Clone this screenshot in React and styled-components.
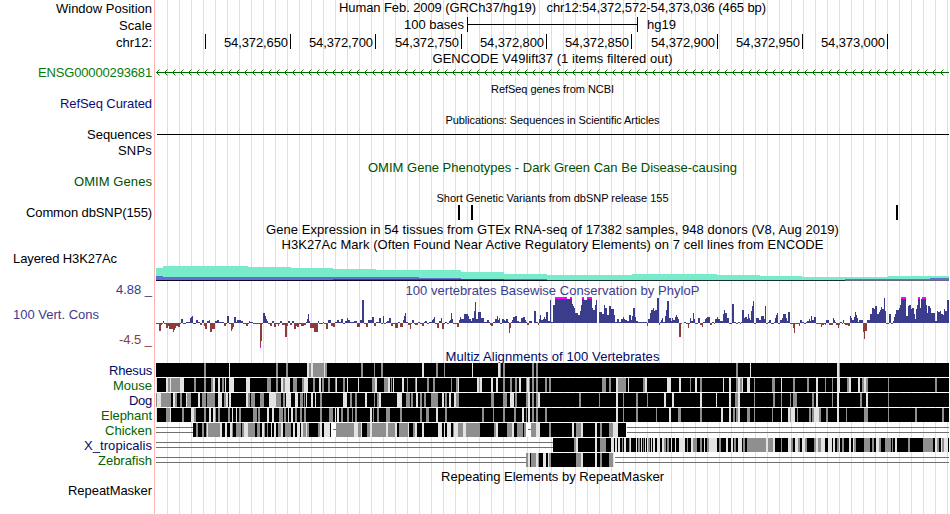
import { useLayoutEffect, useRef, useState } from "react";
import styled, { createGlobalStyle } from "styled-components";

const colors = {
  ink: "#000",
  gene: "#0a7a0a",
  refseq: "#0c0c78",
  omim: "#005000",
  navy: "#000a64",
  green: "#006400",
  wiggle: "#3c3c8c",
  wiggleDark: "#8c3c3c",
};

const GlobalStyle = createGlobalStyle`
  body {
    margin: 0;
    background: #fff;
  }
`;

const Browser = styled.main`
  width: 950px;
  height: 514px;
  overflow: hidden;
  font-family: "Liberation Sans", Arial, sans-serif;
  font-size: 13px;
  line-height: 15px;
  color: ${colors.ink};
  background:
    linear-gradient(
      90deg,
      #fff 154px,
      #ffb4b4 154px 155px,
      #fff 155px 156px,
      transparent 156px
    ),
    linear-gradient(90deg, #dcdcf8 1px, transparent 1px) 11px 0 / 12px 100%;
`;

const Row = styled.div`
  display: grid;
  grid-template-columns: 155px 1fr;
  height: ${({ $h }) => $h}px;
`;

const Label = styled.div`
  box-sizing: border-box;
  padding: ${({ $top }) => $top || 0}px 3px 0 0;
  color: ${({ $color }) => $color || colors.ink};
  text-align: right;
  white-space: nowrap;
`;

const SideLabel = styled(Label)`
  padding-left: 13px;
  text-align: left;
`;

const Title = styled.div`
  grid-column: 2;
  padding-top: ${({ $top }) => $top || 0}px;
  color: ${({ $color }) => $color || colors.ink};
  font-size: ${({ $small }) => ($small ? 11 : 13)}px;
  text-align: center;
  white-space: nowrap;
`;

const Fitted = styled.span`
  display: inline-block;
  white-space: pre;
`;

const Plot = styled.svg`
  grid-column: 2;
  display: block;
  width: 795px;
  height: ${({ $h }) => $h}px;
  shape-rendering: ${({ $smooth }) => ($smooth ? "auto" : "crispEdges")};
`;

const ScaleBar = styled.div`
  display: flex;
  height: 15px;
`;

const ScaleText = styled.div`
  box-sizing: border-box;
  width: ${({ $w }) => $w}px;
  padding: 0 3px 0 9px;
  text-align: ${({ $align }) => $align};
`;

const Span = styled.div`
  box-sizing: border-box;
  width: 171px;
  border: solid #000;
  border-width: 0 1px;
  background: linear-gradient(#000, #000) 0 7px / 100% 1px no-repeat;
`;

const Ruler = styled.div`
  display: flex;
  height: 15px;
  padding-top: 1px;
`;

const Tick = styled.div`
  box-sizing: border-box;
  width: ${({ $w }) => $w}px;
  padding-right: 2px;
  border-right: 1px solid #000;
  line-height: 17px;
  text-align: right;
`;

const Range = styled(Label)`
  display: grid;
  grid-template-rows: 25px 25px 1fr;
`;

const Limit = styled.div`
  color: ${({ $color }) => $color};
`;

const RangeName = styled(Limit)`
  padding-left: 13px;
  text-align: left;
`;

const Stack = styled.div`
  display: grid;
  grid-template-columns: 0 795px;
  grid-template-rows: 14px 51px;
  padding-top: 1px;
`;

// Spreads the letters of a line over a fixed number of pixels.
function Fit({ w, children }) {
  const ref = useRef(null);
  const [spacing, setSpacing] = useState(0);

  useLayoutEffect(() => {
    const natural = ref.current.getBoundingClientRect().width;
    setSpacing((w - natural) / children.length);
  }, []);

  return (
    <Fitted ref={ref} style={{ letterSpacing: `${spacing}px` }}>
      {children}
    </Fitted>
  );
}

const ticks = [
  [51, ""],
  [85, "54,372,650"],
  [85, "54,372,700"],
  [86, "54,372,750"],
  [85, "54,372,800"],
  [85, "54,372,850"],
  [86, "54,372,900"],
  [85, "54,372,950"],
  [85, "54,373,000"],
];

// Steps are "x:value"; each value holds until the next x.
const parseSteps = (text, end) => {
  const points = text
    .trim()
    .split(/\s+/)
    .map((p) => p.split(":").map(Number));
  return points.map(([x, v], i) => ({
    x,
    v,
    w: (points[i + 1] ? points[i + 1][0] : end) - x,
  }));
};

const acetylation = [
  {
    fill: "#77ebca",
    steps: "156:12 163:14 248:13 291:12 333:11 376:10 461:8 504:6 547:5 632:6 717:5 760:4 802:3 888:4",
  },
  {
    fill: "#6272cc",
    steps: "156:4 163:3 333:3 376:3 419:2 461:1 547:0 845:1 930:2",
  },
  { fill: "#2f3ccc", steps: "156:0 333:1 461:1 504:0" },
];

const phyloP = parseSteps(
  `
  156:-1 159:-8 161:-2 162:-1 163:2 164:-1 166:-5 168:-3 169:-6 173:-9 174:-7 175:-5 176:-3
  178:-4 180:-1 181:4 183:-1 186:1 190:5 191:6 192:7 193:-1 196:3 198:1 200:-2 202:3 204:-3
  205:-6 207:2 209:3 210:-9 212:-6 215:2 217:3 219:1 224:-3 226:-1 227:7 229:-1 231:-8
  232:-6 233:-4 234:6 236:1 237:3 241:2 243:-1 246:-3 248:-1 249:2 250:1 253:-1 260:-25
  261:-18 262:-1 263:10 265:7 266:4 267:2 268:-1 270:-3 272:2 274:-4 276:-1 278:-3 279:-1
  280:2 282:-2 285:-14 287:-3 288:2 290:-2 292:2 294:-6 296:-3 297:-4 299:-1 301:-3 304:-2
  306:1 307:4 308:9 309:2 310:-5 314:-9 318:2 319:-1 323:1 324:-1 326:-6 328:3 331:-3
  333:-4 335:1 337:3 339:1 341:4 343:-1 345:2 347:5 348:3 350:1 354:2 357:-4 360:3
  362:23 364:-1 366:-4 368:3 370:3 372:6 374:-3 376:1 379:5 381:-1 383:7 384:-1 386:1
  387:2 389:5 391:-3 393:-1 395:-5 398:1 400:-4 403:3 404:7 405:10 406:1 408:-2 410:-6
  411:-1 412:3 414:-1 415:-2 418:1 420:-1 422:-3 424:1 425:2 427:-1 429:1 432:3 433:4
  434:6 435:-1 437:-5 439:2 441:5 442:-6 444:-1 445:1 447:-1 449:2 450:3 451:10 452:4
  453:-1 457:-4 459:3 460:6 461:4 462:4 464:9 468:7 469:4 471:2 472:5 474:12 475:21 476:4
  478:11 481:5 484:1 487:3 489:1 490:-2 491:-3 493:1 495:4 497:7 498:3 499:5 500:-1
  502:4 504:3 505:2 506:4 508:1 509:-10 510:-5 511:1 512:3 513:6 515:7 517:2 519:1 521:5
  523:6 525:3 526:1 527:-2 529:2 532:0 534:12 536:1 538:-2 539:4 540:8 541:3 543:4 544:6
  545:4 546:11 548:2 550:23 551:1 553:18 555:25 567:24 570:25 572:19 573:17 574:15
  575:10 578:8 580:12 581:18 582:25 584:23 587:25 592:15 593:13 595:18 596:23 597:0
  599:11 602:9 604:18 605:15 607:8 609:17 611:14 614:8 615:1 617:4 619:1 621:4 623:6
  624:4 625:3 627:2 629:8 631:3 632:7 633:15 635:6 636:2 638:1 647:-3 648:4 650:10 651:13
  653:15 654:12 655:13 657:25 659:-2 660:1 661:3 662:5 663:1 665:7 666:13 667:22 669:5
  671:2 672:5 673:3 675:6 676:8 677:6 678:4 679:-14 681:-1 682:0 684:1 686:-1 688:-5
  689:-1 690:5 691:2 693:10 694:4 695:-1 698:5 700:-2 702:-4 703:1 705:4 706:5 707:6
  710:-2 712:1 714:-1 715:4 717:6 718:4 720:2 723:9 724:13 725:10 727:5 729:-1 732:19
  734:1 736:-1 738:1 740:-1 741:1 742:13 744:5 745:6 747:4 748:9 749:5 750:3 751:12
  752:17 753:22 754:-1 756:5 759:3 761:7 764:4 765:17 766:-1 768:1 769:3 771:-1 774:1
  775:5 776:8 777:10 778:-1 780:3 782:5 783:9 786:5 787:2 788:11 790:-1 793:-5 794:-10
  795:-1 799:-3 800:3 802:1 804:-1 806:1 807:2 809:4 810:2 811:7 812:3 814:6 816:-1
  821:-4 822:-2 824:-1 825:-2 826:3 829:-2 833:5 834:3 835:1 836:-2 838:-5 839:-2 840:1
  842:-1 843:3 844:-1 845:-2 848:-3 850:7 851:5 852:3 854:6 855:11 856:8 857:5 858:1
  859:3 861:3 863:-9 864:-16 865:-8 867:3 870:9 872:15 874:14 875:17 877:9 879:11 880:13
  881:16 882:14 884:25 885:12 886:-1 889:9 891:-1 893:2 894:6 895:9 896:13 899:15 900:18
  901:25 906:7 908:17 909:18 911:14 912:15 914:9 915:4 916:14 917:18 918:25 920:15
  921:24 922:25 926:18 927:10 928:17 930:15 931:10 933:10 935:2 937:12 938:11 940:12
  941:9 943:8 944:14 945:12 947:23`,
  949,
);

// Ranges where the signal runs past the limits of the plot.
const clipped = [
  [555, 12], [570, 2], [582, 2], [587, 5], [901, 5], [918, 2], [922, 4],
];

// Cells are position, shade and width: g = grey, l = light, w = white gap.
const species = [
  {
    name: "Rhesus",
    w: 43,
    color: colors.navy,
    from: 156,
    to: 949,
    cells: `204g2 229l1 276g2 286g2 307l2 309g2 311l2 313g11 324l1 325g2 361g2 374g1 381g2
      422l2 436g2 444g1 472l1 498l2 500g1 503g2 532g2 536g2 736g2 750l1 837l2 839g1`,
  },
  {
    name: "Mouse",
    w: 39,
    color: colors.green,
    from: 156,
    to: 949,
    cells: `156l1 166l2 168g2 170l1 171g9 180l4 194g2 204g2 211g2 213l2 218l2 222g2 225l1
      229l5 246l4 267g4 276g2 281l2 283g2 285l5 293g4 302g2 304l4 313g2 319l2 322g2 328g2
      335g1 336l1 343g2 347l1 358l1 372g3 375l2 384g4 388l2 391g1 393l1 402l2 407g1 415g1
      416l1 427g2 433g2 451g1 456g2 458l1 477l2 479g1 480l2 491l2 496l2 503g2 510g2 515g2
      519l2 526g1 527l2 529g1 532g2 536g2 545g2 549g2 602g4 609g2 616l2 618g8 628l1 643g2
      645l2 667l4 679l2 690g1 695l2 700g2 723l1 729l2 736g2 738l2 740g2 742l1 747l3 754g1
      772g3 781l1 793g2 807g2 816l2 825g1 832g1 837l3 847g2 849l2 858l2 862g2 864l2 866g2
      888g1 935g2`,
  },
  {
    name: "Dog",
    w: 23,
    color: colors.navy,
    from: 156,
    to: 949,
    cells: `156g1 157l4 161g10 173l2 175g2 180g2 186l1 187g4 198l2 202g4 207g1 208g7 218l4
      224g2 226l2 229l2 246l2 248g2 251g4 260g4 269l7 276g5 283g2 286l5 295l3 300g3 304g1
      306l1 311l2 315l1 320g2 343l4 350g2 355g2 365l2 374g1 377g2 379l2 397l5 406g4 411g2
      416l2 420g2 424g2 431g7 442l2 445g2 449l2 454l2 456g3 491g3 503g4 510l4 515g2 526g2
      528l2 532g2 536g2 538l2 579g2 599g1 616l2 623g1 636g2 647g1 664l2 672l2 700l2 716l1
      729l2 735g3 738l2 754g1 773g2 781g1 790g1 793g4 812g2 816l2 832g1 837l2 860g2 866l2
      888g1`,
  },
  {
    name: "Elephant",
    w: 51,
    color: colors.green,
    from: 156,
    to: 949,
    cells: `156l1 166g4 170l1 182g2 191l3 194g2 204g2 209l2 213l2 215g1 218g2 228g2 232l1
      236l1 239g2 253g4 258g2 267l2 272l2 279g4 284g2 288l1 291l2 295g2 300g2 304g2 320g2
      329g4 335l1 337l2 341g2 347g2 352g1 355g2 370l2 373g1 377g2 386g4 400g2 420g2 426g3
      436l2 445g2 482g2 493g1 503g2 514g2 522l2 526g1 528l2 532g2 536g2 545g2 616l2 623g1
      636g2 656g1 669l2 678g3 700g2 721l2 729l2 733g2 736g2 738l2 747g3 754g1 772g1 781l1
      788l2 790g1 791l4 797g1 809g2 812g2 814l5 819g2 826g2 837l2 846g1 864g4 888g1 915g2
      942g2`,
  },
  {
    name: "Chicken",
    w: 47,
    color: colors.green,
    from: 193,
    to: 626,
    cells: `196g2 202g2 206g1 207l1 208g12 220l2 225l2 230l2 232g1 236g5 242g2 244l4 248g7
      257g3 262l2 264g1 267g1 271l1 274l2 278g3 281l2 285g6 293l2 297l3 301l2 303g3 306l1
      307g2 318g2 320l2 324l6 331w5 336g18 354l4 358g3 361l1 367g3 370l2 372g14 386l2
      388g7 395l2 399g9 408l1 413g2 415l2 422l2 438l4 444l1 447l4 453g1 454l4 458g5 463l3
      466g14 494g2 496l2 507g5 512l2 517g5 522g1 524g2 526w5 531g5 536l4 549g2 572l2 576g5
      581l2 595l2 600g2 609g4 613l5`,
  },
  {
    name: "X_tropicalis",
    w: 68,
    color: colors.navy,
    from: 553,
    to: 949,
    cells: `574g2 576l2 595l2 600g6 611l3 615l2 618l2 622g1 624l2 629g1 630l1 636l1 638g2
      641l1 643g1 645l1 647l1 648g2 651l1 653l2 657l3 662l2 664g2 667g2 671l1 675l1 679l6
      687g1 691l2 693g4 700g2 704l1 707g2 709l8 719g2 726l2 731l2 734g2 738l4 743g2 747g7
      754g12 766l2 768g5 773l2 781g1 788l3 791g2 795l3 798g2 802l3 805g2 814g2 816l2 818g3
      821l4 828l4 833l2 837g2 839l1 842g2 849l2 853l1 854g2 864g6 872g2 876l3 879g2 885g6
      892g1 895l2 908g2 923g10 935l2 937g2 941l1 942g2 944l4`,
  },
  {
    name: "Zebrafish",
    w: 54,
    color: colors.green,
    from: 526,
    to: 614,
    cells: `526g2 528l2 531g5 536l2 538g1 543l3 548l1 549g2 576g5 581l2 595l2 600g2 609g4
      613l1`,
  },
];

const shades = { g: "#8f8f8f", l: "#e3e3e3", w: "#fff" };

function Alignment({ from, to, cells }) {
  const parts = cells
    .trim()
    .split(/\s+/)
    .map((c) => c.match(/(\d+)([glw])(\d+)/));

  return (
    <Plot $h={15} viewBox="155 0 795 15">
      {[4, 9].map((y) => (
        <g key={y} fill="#707070">
          {from > 156 && <rect x={156} y={y} width={from - 156} height={1} />}
          {to < 949 && <rect x={to + 1} y={y} width={948 - to} height={1} />}
        </g>
      ))}
      <rect x={from} y={0} width={to - from} height={14} />
      {parts.map(([, x, shade, w]) => (
        <rect key={x} x={x} y={0} width={w} height={14} fill={shades[shade]} />
      ))}
      {parts
        .filter((p) => p[2] === "w")
        .map(([, x]) => (
          <rect key={x} x={+x + 2} y={6} width={3} height={1} fill="#707070" />
        ))}
    </Plot>
  );
}

function GeneLine() {
  let arrows = "";
  for (let x = 156.5; x < 946; x += 8) {
    arrows += `M${x + 3} 4.5L${x} 7.5L${x + 3} 10.5`;
  }
  return (
    <Plot $h={15} $smooth viewBox="155 0 795 15">
      <rect x={156} y={7} width={793} height={1} fill="#006400" />
      <path d={arrows} fill="none" stroke="#0c780c" strokeWidth={1} />
    </Plot>
  );
}

function Acetylation() {
  return (
    <Plot $h={32} viewBox="155 0 795 32">
      {acetylation.map(({ fill, steps }) =>
        parseSteps(steps, 949).map(({ x, v, w }) => (
          <rect key={fill + x} x={x} y={29 - v} width={w} height={v} fill={fill} />
        )),
      )}
      <rect x={156} y={29} width={793} height={1} fill="#100828" />
      <rect x={547} y={29} width={298} height={1} fill="#183030" />
      <rect x={845} y={29} width={104} height={1} fill="#686880" />
    </Plot>
  );
}

function Conservation() {
  return (
    <Plot $h={51} viewBox="155 297 795 51">
      {phyloP.map(({ x, v, w }) => (
        <rect
          key={x}
          x={x}
          y={v > 0 ? 323 - v : 323}
          width={w}
          height={Math.abs(v)}
          fill={v > 0 ? colors.wiggle : colors.wiggleDark}
        />
      ))}
      {clipped.map(([x, w]) => (
        <rect key={x} x={x} y={297} width={w} height={2} fill="#f0f" />
      ))}
      <rect x={260} y={346} width={1} height={2} fill="#f0f" />
    </Plot>
  );
}

export default function App() {
  return (
    <>
      <GlobalStyle />
      <Browser>
        <Row $h={17}>
          <Label $top={1}><Fit w={96}>Window Position</Fit></Label>
          <Title>
            <Fit w={427}>
              {"Human Feb. 2009 (GRCh37/hg19)   chr12:54,372,572-54,373,036 (465 bp)"}
            </Fit>
          </Title>
        </Row>
        <Row $h={16}>
          <Label $top={1}><Fit w={33}>Scale</Fit></Label>
          <ScaleBar>
            <ScaleText $w={312} $align="right"><Fit w={60}>100 bases</Fit></ScaleText>
            <Span />
            <ScaleText $w={60} $align="left"><Fit w={29}>hg19</Fit></ScaleText>
          </ScaleBar>
        </Row>
        <Row $h={17}>
          <Label $top={2}><Fit w={36}>chr12:</Fit></Label>
          <Ruler>
            {ticks.map(([w, text]) => (
              <Tick key={text} $w={w}>{text && <Fit w={64}>{text}</Fit>}</Tick>
            ))}
          </Ruler>
        </Row>
        <Row $h={15}>
          <Title $top={1}><Fit w={240}>GENCODE V49lift37 (1 items filtered out)</Fit></Title>
        </Row>
        <Row $h={15}>
          <Label $color={colors.gene}><Fit w={114}>ENSG00000293681</Fit></Label>
          <GeneLine />
        </Row>
        <Row $h={16}>
          <Title $small $top={2}><Fit w={123}>RefSeq genes from NCBI</Fit></Title>
        </Row>
        <Row $h={15}>
          <Label $color={colors.refseq}><Fit w={92}>RefSeq Curated</Fit></Label>
        </Row>
        <Row $h={16}>
          <Title $small $top={2}>
            <Fit w={214}>Publications: Sequences in Scientific Articles</Fit>
          </Title>
        </Row>
        <Row $h={16}>
          <Label><Fit w={65}>Sequences</Fit></Label>
          <Plot $h={15} viewBox="155 0 795 15">
            <rect x={157} y={7} width={792} height={1} />
          </Plot>
        </Row>
        <Row $h={17}>
          <Label><Fit w={34}>SNPs</Fit></Label>
        </Row>
        <Row $h={14}>
          <Title $color={colors.omim}>
            <Fit w={369}>OMIM Gene Phenotypes - Dark Green Can Be Disease-causing</Fit>
          </Title>
        </Row>
        <Row $h={16}>
          <Label $color={colors.omim}><Fit w={78}>OMIM Genes</Fit></Label>
        </Row>
        <Row $h={15}>
          <Title $small $top={1}>
            <Fit w={232}>Short Genetic Variants from dbSNP release 155</Fit>
          </Title>
        </Row>
        <Row $h={17}>
          <Label><Fit w={126}>Common dbSNP(155)</Fit></Label>
          <Plot $h={15} viewBox="155 0 795 15">
            {[458, 471, 896].map((x) => (
              <rect key={x} x={x} y={0} width={2} height={15} />
            ))}
          </Plot>
        </Row>
        <Row $h={15}>
          <Title>
            <Fit w={573}>
              {"Gene Expression in 54 tissues from GTEx RNA-seq of 17382 samples, 948 donors (V8, Aug 2019)"}
            </Fit>
          </Title>
        </Row>
        <Row $h={14}>
          <Title>
            <Fit w={542}>
              {"H3K27Ac Mark (Often Found Near Active Regulatory Elements) on 7 cell lines from ENCODE"}
            </Fit>
          </Title>
        </Row>
        <Row $h={31}>
          <SideLabel><Fit w={104}>Layered H3K27Ac</Fit></SideLabel>
          <Acetylation />
        </Row>
        <Row $h={67}>
          <Range>
            <Limit $color={colors.wiggle}><Fit w={36}>4.88 _</Fit></Limit>
            <RangeName $color={colors.wiggle}><Fit w={86}>100 Vert. Cons</Fit></RangeName>
            <Limit $color={colors.wiggleDark}><Fit w={33}>-4.5 _</Fit></Limit>
          </Range>
          <Stack>
            <Title $color={colors.wiggle}>
              <Fit w={294}>100 vertebrates Basewise Conservation by PhyloP</Fit>
            </Title>
            <Conservation />
          </Stack>
        </Row>
        <Row $h={14}>
          <Title $color={colors.navy}><Fit w={214}>Multiz Alignments of 100 Vertebrates</Fit></Title>
        </Row>
        {species.map(({ name, w, color, ...track }) => (
          <Row $h={15} key={name}>
            <Label $color={color}><Fit w={w}>{name}</Fit></Label>
            <Alignment {...track} />
          </Row>
        ))}
        <Row $h={15}>
          <Title $top={1}><Fit w={223}>Repeating Elements by RepeatMasker</Fit></Title>
        </Row>
        <Row $h={31}>
          <Label><Fit w={84}>RepeatMasker</Fit></Label>
        </Row>
      </Browser>
    </>
  );
}
